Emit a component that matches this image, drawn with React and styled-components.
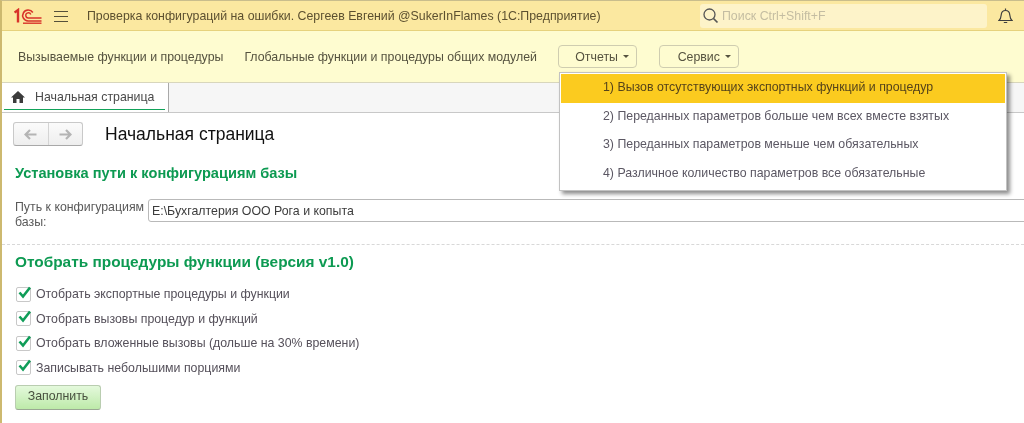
import React from "react";
import styled, { createGlobalStyle } from "styled-components";

const Global = createGlobalStyle`
  html, body { margin: 0; padding: 0; background: #fff; }
  body { font-family: "Liberation Sans", Arial, sans-serif; font-size: 12.35px; color: #4b4b4b; }
`;

const Frame = styled.div`
  position: relative;
  width: 1024px;
  height: 423px;
  overflow: hidden;
  box-sizing: border-box;
  border-left: 2px solid #cdb96f;
  border-top: 1px solid #c9bd8c;
  filter: blur(0.3px);
`;

const Header = styled.header`
  display: flex;
  align-items: center;
  height: 30px;
  box-sizing: border-box;
  padding-left: 12px;
  background: #fbe8a0;
  border-bottom: 1px solid #e6d27d;
`;

const Title = styled.div`
  margin-left: 19px;
  width: 613px;
  color: #5c5030;
  white-space: nowrap;
`;

const Search = styled.div`
  display: flex;
  align-items: center;
  gap: 3px;
  width: 287px;
  height: 24px;
  box-sizing: border-box;
  padding-left: 2px;
  background: #fdf3c9;
  border-radius: 3px;
  color: #c4bda2;
`;

const BellSlot = styled.div`
  display: flex;
  margin-left: 11px;
`;

const Toolbar = styled.div`
  display: flex;
  align-items: center;
  height: 52px;
  box-sizing: border-box;
  padding: 0 0 0 16px;
  background: #fefcd0;
  border-bottom: 1px solid #d8d6bc;
`;

const ToolLink = styled.span`
  margin-right: 21px;
  color: #55523f;
  white-space: nowrap;
`;

const ToolButton = styled.div`
  display: flex;
  align-items: center;
  justify-content: flex-end;
  width: ${(p) => p.$width}px;
  height: 23px;
  box-sizing: border-box;
  margin-right: 22px;
  padding-right: 7px;
  border: 1px solid #cfcdb0;
  border-radius: 4px;
  color: #55523f;
  &::after {
    content: "";
    margin-left: 5px;
    border: 3px solid transparent;
    border-top: 3px solid #55523f;
    border-bottom: 0;
  }
`;

const TabBar = styled.div`
  display: flex;
  height: 30px;
  box-sizing: border-box;
  background: #f6f6f6;
  border-bottom: 1px solid #c8c8c8;
`;

const Tab = styled.div`
  position: relative;
  display: flex;
  align-items: center;
  gap: 10px;
  width: 167px;
  box-sizing: border-box;
  padding: 0 0 2px 9px;
  background: #fff;
  border-right: 1px solid #a9a9a9;
  color: #4a4a4a;
  &::after {
    content: "";
    position: absolute;
    left: 2px;
    right: 3px;
    bottom: 2px;
    height: 1px;
    background: #12a35a;
  }
`;

const Content = styled.main`
  background: #fff;
`;

const PageHead = styled.div`
  display: flex;
  align-items: center;
  padding: 9px 0 0 11px;
  height: 24px;
`;

const Nav = styled.div`
  display: flex;
  width: 70px;
  height: 24px;
  box-sizing: border-box;
  border: 1px solid #c9c9c9;
  border-bottom-color: #a8a8a8;
  border-radius: 3px;
  background: linear-gradient(#fbfbfb, #eeeeee);
`;

const NavPart = styled.div`
  flex: 1;
  display: flex;
  align-items: center;
  justify-content: center;
  & + & { border-left: 1px solid #d4d4d4; }
`;

const PageTitle = styled.h1`
  margin: 1px 0 0 22px;
  font-size: 17.5px;
  font-weight: 400;
  color: #111;
`;

const SectionTitle = styled.h2`
  margin: ${(p) => p.$top}px 0 0 13px;
  font-size: ${(p) => p.$size}px;
  line-height: 16px;
  font-weight: 700;
  color: #0d9a52;
`;

const PathRow = styled.div`
  display: flex;
  margin: 18px 0 0 13px;
`;

const PathLabel = styled.label`
  width: 133px;
  padding-top: 1px;
  line-height: 15px;
  color: #5a5a5a;
`;

const PathInput = styled.div`
  flex: 1;
  height: 23px;
  box-sizing: border-box;
  margin-right: -4px;
  padding: 4px 0 0 3px;
  border: 1px solid #b9b9b9;
  border-radius: 3px;
  color: #3c3c3c;
`;

const Divider = styled.hr`
  margin: 14px 0 0;
  border: 0;
  border-top: 1px dashed #d8d8d8;
`;

const Checks = styled.div`
  display: flex;
  flex-direction: column;
  gap: 8.6px;
  margin: 16px 0 0 14px;
`;

const CheckRow = styled.label`
  display: flex;
  align-items: center;
  gap: 5px;
  height: 16px;
  color: #55505a;
`;

const CheckBox = styled.span`
  position: relative;
  width: 13px;
  height: 13px;
  border: 1px solid #c8c8c8;
  border-radius: 2px;
  background: #fff;
  & > svg {
    position: absolute;
    left: 0;
    top: -3px;
  }
`;

const FillButton = styled.button`
  display: block;
  width: 86px;
  height: 25px;
  margin: 9px 0 0 13px;
  padding: 0 0 2px;
  border: 1px solid #b9cdb0;
  border-bottom-color: #9aa893;
  border-radius: 3px;
  background: linear-gradient(#e4f9dc, #bdeaa9);
  font: inherit;
  color: #48503f;
`;

const Menu = styled.div`
  position: absolute;
  left: 557px;
  top: 71px;
  width: 448px;
  box-sizing: border-box;
  border: 1px solid #c2c2c2;
  padding: 1px 1px 2px;
  background: #fff;
  box-shadow: 3px 3px 4px rgba(0, 0, 0, 0.45);
`;

const MenuItem = styled.div`
  height: 28.6px;
  line-height: 27px;
  padding-left: 42px;
  color: ${(p) => (p.$active ? "#55431a" : "#5b5763")};
  background: ${(p) => (p.$active ? "#fbcb1f" : "transparent")};
`;

const Logo = () => (
  <svg width="28" height="16" viewBox="0 0 28 16" fill="none" stroke="#d8322a">
    <path d="M0.500 4.500L4 2V14.500" strokeWidth="2.400" />
    <path d="M27.500 13H14A5.500 5.500 0 1 1 18.800 4.500" strokeWidth="1.600" />
    <path d="M27.500 10H14.300A2.600 2.600 0 1 1 16.800 6.500" strokeWidth="1.400" />
    <path d="M9 15.200H27.500" strokeWidth="1.400" />
  </svg>
);

const Burger = () => (
  <svg width="14" height="12" viewBox="0 0 14 12" stroke="#55503a" style={{ marginLeft: 12 }}>
    <path d="M0 1.500H14M0 6.500H14M0 11.500H14" />
  </svg>
);

const Lens = () => (
  <svg width="17" height="17" viewBox="0 0 17 17" fill="none" stroke="#555">
    <circle cx="7.500" cy="7.500" r="5.500" strokeWidth="1.300" />
    <path d="M11.500 11.500L15.500 15.500" strokeWidth="1.700" />
  </svg>
);

const Bell = () => (
  <svg width="15" height="16" viewBox="0 0 15 16" fill="none" stroke="#3f3f3f" strokeWidth="1.200">
    <path d="M1 12.500H14C12.300 11 12 9.500 11.800 7 11.600 4 10 2.500 7.500 2.500S3.400 4 3.200 7C3 9.500 2.700 11 1 12.500Z" />
    <path d="M7.500 0.500V2.500M5.800 14.500H9.200" />
  </svg>
);

const Home = () => (
  <svg width="14" height="12" viewBox="0 0 14 12" fill="#3c3c3c">
    <path d="M7 0L14 6.500H12V12H8.500V8H5.500V12H2V6.500H0Z" />
  </svg>
);

const Arrow = ({ left }) => (
  <svg width="13" height="11" viewBox="0 0 13 11" fill="none" stroke="#b4b4b4" strokeWidth="2.200">
    {left ? <path d="M12.500 5.500H2M6 1L1.500 5.500L6 10" /> : <path d="M0.500 5.500H11M7 1L11.500 5.500L7 10" />}
  </svg>
);

const Tick = () => (
  <svg width="15" height="15" viewBox="0 0 15 15" fill="none" stroke="#0f9d58" strokeWidth="2.600">
    <path d="M2.500 7.500L6 11.500L13 2.500" />
  </svg>
);

const checks = [
  "Отобрать экспортные процедуры и функции",
  "Отобрать вызовы процедур и функций",
  "Отобрать вложенные вызовы (дольше на 30% времени)",
  "Записывать небольшими порциями",
];

const menuItems = [
  "1) Вызов отсутствующих экспортных функций и процедур",
  "2) Переданных параметров больше чем всех вместе взятых",
  "3) Переданных параметров меньше чем обязательных",
  "4) Различное количество параметров все обязательные",
];

export default function App() {
  return (
    <Frame>
      <Global />
      <Header>
        <Logo />
        <Burger />
        <Title>Проверка конфигураций на ошибки. Сергеев Евгений @SukerInFlames (1С:Предприятие)</Title>
        <Search>
          <Lens />
          Поиск Ctrl+Shift+F
        </Search>
        <BellSlot>
          <Bell />
        </BellSlot>
      </Header>
      <Toolbar>
        <ToolLink>Вызываемые функции и процедуры</ToolLink>
        <ToolLink>Глобальные функции и процедуры общих модулей</ToolLink>
        <ToolButton $width={79}>Отчеты</ToolButton>
        <ToolButton $width={80}>Сервис</ToolButton>
      </Toolbar>
      <TabBar>
        <Tab>
          <Home />
          Начальная страница
        </Tab>
      </TabBar>
      <Content>
        <PageHead>
          <Nav>
            <NavPart>
              <Arrow left />
            </NavPart>
            <NavPart>
              <Arrow />
            </NavPart>
          </Nav>
          <PageTitle>Начальная страница</PageTitle>
        </PageHead>
        <SectionTitle $top={19} $size={14.6}>Установка пути к конфигурациям базы</SectionTitle>
        <PathRow>
          <PathLabel>
            Путь к конфигурациям
            <br />
            базы:
          </PathLabel>
          <PathInput>E:\Бухгалтерия ООО Рога и копыта</PathInput>
        </PathRow>
        <Divider />
        <SectionTitle $top={9} $size={15.4}>Отобрать процедуры функции (версия v1.0)</SectionTitle>
        <Checks>
          {checks.map((text) => (
            <CheckRow key={text}>
              <CheckBox>
                <Tick />
              </CheckBox>
              {text}
            </CheckRow>
          ))}
        </Checks>
        <FillButton>Заполнить</FillButton>
      </Content>
      <Menu>
        {menuItems.map((text, i) => (
          <MenuItem key={text} $active={i === 0}>
            {text}
          </MenuItem>
        ))}
      </Menu>
    </Frame>
  );
}
